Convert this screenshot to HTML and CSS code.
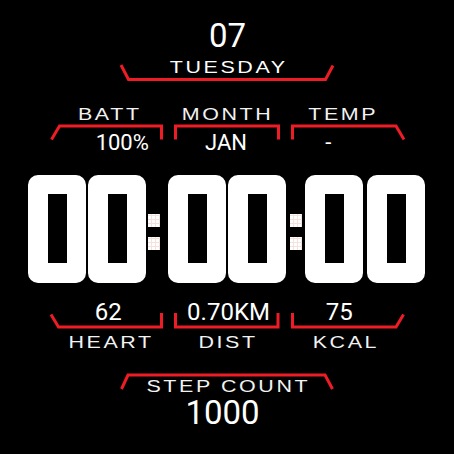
FILE: index.html
```html
<!DOCTYPE html>
<html lang="en">
<head>
<meta charset="utf-8">
<title>Watch face</title>
<link rel="stylesheet" href="styles.css">
</head>
<body>
<div class="face">
  <div class="date">07</div>

  <div class="day">
    <svg class="bracket" width="216" height="18" viewBox="0 0 216 18"><path d="M2,1 L9.5,15.5 L206.5,15.5 L214,1.5"/></svg>
    <div class="day-name"><span class="wide">TUESDAY</span></div>
  </div>

  <div class="stats stats-top">
    <div class="stat">
      <div class="label lbl-batt"><span class="wide">BATT</span></div>
      <div class="box">
        <svg class="bracket" width="113.5" height="16.5" viewBox="0 0 113.5 16.5"><path d="M1.5,16.5 L9.5,3 L111.5,3 L111.5,16.5"/></svg>
        <div class="value val-batt">100%</div>
      </div>
    </div>
    <div class="stat">
      <div class="label lbl-month"><span class="wide">MONTH</span></div>
      <div class="box">
        <svg class="bracket" width="106" height="16.5" viewBox="0 0 106 16.5"><path d="M1.5,16.5 L1.5,3 L104.5,3 L104.5,16.5"/></svg>
        <div class="value val-month">JAN</div>
      </div>
    </div>
    <div class="stat">
      <div class="label lbl-temp"><span class="wide">TEMP</span></div>
      <div class="box">
        <svg class="bracket" width="114.5" height="16.5" viewBox="0 0 114.5 16.5"><path d="M1.5,16.5 L1.5,3 L105,3 L113,16.5"/></svg>
        <div class="value val-temp">-</div>
      </div>
    </div>
  </div>

  <div class="clock" role="timer" aria-label="00:00:00">
    <div class="pair"><div class="digit"></div><div class="digit"></div></div>
    <div class="colon colon-1"><i></i><i></i></div>
    <div class="pair"><div class="digit"></div><div class="digit"></div></div>
    <div class="colon colon-2"><i></i><i></i></div>
    <div class="pair pair-wide"><div class="digit"></div><div class="digit"></div></div>
  </div>

  <div class="stats stats-bottom">
    <div class="stat">
      <div class="box">
        <div class="value val-heart">62</div>
        <svg class="bracket" width="113.5" height="16" viewBox="0 0 113.5 16"><path d="M1,1.5 L8.5,14 L111.5,14 L111.5,0"/></svg>
      </div>
      <div class="label lbl-heart"><span class="wide">HEART</span></div>
    </div>
    <div class="stat">
      <div class="box">
        <div class="value val-dist">0.70KM</div>
        <svg class="bracket" width="106" height="16" viewBox="0 0 106 16"><path d="M1.5,0 L1.5,14 L104,14 L104,0"/></svg>
      </div>
      <div class="label lbl-dist"><span class="wide">DIST</span></div>
    </div>
    <div class="stat">
      <div class="box">
        <div class="value val-kcal">75</div>
        <svg class="bracket" width="114.5" height="16" viewBox="0 0 114.5 16"><path d="M1.5,0 L1.5,14 L105,14 L112.5,1.5"/></svg>
      </div>
      <div class="label lbl-kcal"><span class="wide">KCAL</span></div>
    </div>
  </div>

  <div class="steps">
    <svg class="bracket" width="216" height="17" viewBox="0 0 216 17"><path d="M2.5,16 L9,2 L206,2 L213.5,16"/></svg>
    <div class="steps-title"><span class="wide">STEP COUNT</span></div>
  </div>
  <div class="count">1000</div>
</div>
</body>
</html>
```

FILE: styles.css
```css
html, body {
  margin: 0;
  background: #000;
}

.face {
  width: 454px;
  height: 454px;
  box-sizing: border-box;
  padding-top: 19px;
  overflow: hidden;
  background: #000;
  color: #fff;
  font-family: "Liberation Sans", Arial, sans-serif;
  display: flex;
  flex-direction: column;
}

.bracket {
  display: block;
  overflow: visible;
}

.bracket path {
  fill: none;
  stroke: #ee1c25;
  stroke-width: 3;
  stroke-linejoin: miter;
}

.wide {
  display: inline-block;
  transform: scaleX(1.3);
  letter-spacing: 2px;
  padding-left: 2px;
}

.date,
.value,
.count {
  font-family: Roboto, "Liberation Sans", Arial, sans-serif;
  font-weight: 400;
}

.date {
  height: 33px;
  font-size: 33px;
  line-height: 33px;
  text-align: center;
  padding-left: 1px;
}

.day {
  display: grid;
  height: 30px;
}

.day > * {
  grid-area: 1 / 1;
}

.day .bracket {
  margin-top: 12px;
  justify-self: center;
}

.day-name {
  margin-top: 6.5px;
  font-size: 16.5px;
  line-height: 16.5px;
  height: 17px;
  text-align: center;
}

.stats {
  display: grid;
  grid-template-columns: 113.5px 106px 114.5px;
  column-gap: 11px;
  padding-left: 49.5px;
}

.stats-top {
  margin-top: 23.5px;
}

.stats-bottom {
  margin-top: 17.2px;
}

.label {
  height: 17px;
  font-size: 16.5px;
  line-height: 17px;
  text-align: center;
  color: #f2f2f2;
}

.box {
  display: grid;
}

.box > * {
  grid-area: 1 / 1;
}

.value {
  text-align: center;
}

.stats-top .value {
  margin-top: 9px;
  font-size: 22px;
  line-height: 22px;
}

.stats-bottom .value {
  font-size: 24px;
  line-height: 24px;
}

.stats-bottom .bracket {
  margin-top: 13.3px;
}

.stats-bottom .label {
  margin-top: 4.1px;
}

.val-batt { padding-left: 32px; }
.val-month { padding-right: 2px; }
.val-temp { padding-right: 40px; }
.lbl-batt { padding-left: 5px; }
.lbl-month { padding-right: 2px; }
.lbl-temp { padding-right: 12px; }

.val-heart { padding-left: 4px; }
.val-dist { padding-left: 3px; }
.val-kcal { padding-right: 18px; }
.lbl-heart { padding-left: 7px; }
.lbl-dist { padding-right: 1.4px; }
.lbl-kcal { padding-right: 6.6px; }

.clock {
  display: flex;
  height: 108px;
  margin-top: 21.5px;
  padding-left: 28px;
}

.pair {
  display: flex;
  gap: 2px;
}

.pair-wide {
  gap: 4px;
}

.digit {
  box-sizing: border-box;
  width: 58px;
  height: 108px;
  background: #000;
  border-style: solid;
  border-color: #fff;
  border-width: 19px 19px 20px 20px;
  border-radius: 10px;
}

.colon {
  display: flex;
  flex-direction: column;
  gap: 10.5px;
  width: 12px;
  padding-top: 39px;
}

.colon-1 { margin: 0 7.5px 0 2px; }
.colon-2 { margin: 0 3.5px 0 4px; }

.colon i {
  display: block;
  width: 12px;
  height: 12.5px;
  background-color: #fff;
  background-image:
    repeating-linear-gradient(90deg, transparent 0 3px, #f6e2dc 3px 4px),
    repeating-linear-gradient(0deg, transparent 0 3px, #f6e2dc 3px 4px);
}

.steps {
  display: grid;
  margin-top: 22.4px;
}

.steps > * {
  grid-area: 1 / 1;
}

.steps .bracket {
  justify-self: center;
}

.steps-title {
  margin-top: 5.3px;
  height: 17px;
  font-size: 16.5px;
  line-height: 17px;
  text-align: center;
  color: #f2f2f2;
}

.count {
  margin-top: 0.4px;
  height: 33px;
  font-size: 33px;
  line-height: 33px;
  text-align: center;
  padding-right: 9px;
}
```
